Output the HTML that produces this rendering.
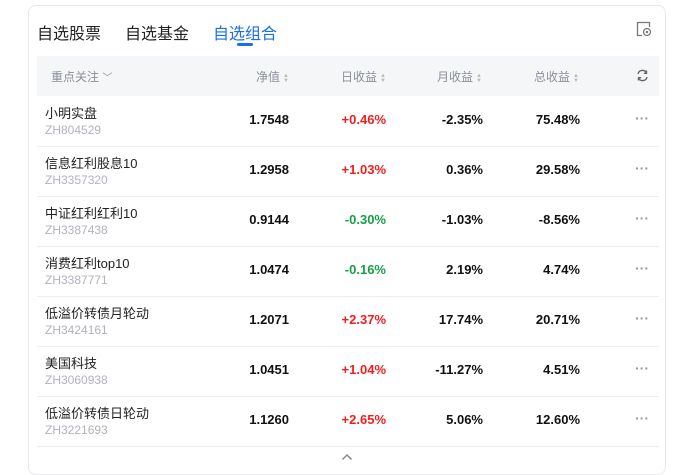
<!DOCTYPE html><html><head><meta charset="utf-8"><style>
body{margin:0;width:673px;height:466px;background:#fff;font-family:"Liberation Sans","Noto Sans CJK SC",sans-serif;overflow:hidden;position:relative}
.card{position:absolute;left:28px;top:5px;width:638px;height:470px;border:1px solid #e6e8ee;border-radius:8px;box-sizing:border-box}
.tab{position:absolute;top:20px;font-size:16px;color:#222}
.tab.a{color:#1a6fe6}
.ul{position:absolute;left:237px;top:43px;width:16px;height:3px;border-radius:2px;background:#1a6fe6}
.hd{position:absolute;left:37px;top:56px;width:622px;height:40px;background:#f5f6f8}
.h{position:absolute;top:68px;font-size:12px;color:#8a8f99}
.ar{display:inline-block;width:5px;vertical-align:-1px;margin-left:3px;font-size:6px;line-height:5px;color:#bbb}
.row{position:absolute;left:37px;width:622px;height:50px;border-bottom:1px solid #eceef2}
.n{position:absolute;left:8px;top:7px;font-size:13px;color:#222}
.c{position:absolute;left:8px;top:27px;font-size:12px;color:#b0b3ba}
.v{position:absolute;top:16px;font-size:13px;font-weight:bold;color:#111;text-align:right;width:90px}
.r{color:#f01f1f}.g{color:#14a04a}
.d{position:absolute;left:598px;top:14px;font-size:14px;font-weight:bold;color:#999}
</style></head><body>
<div class="card"></div>
<div class="tab" style="left:37px">自选股票</div>
<div class="tab" style="left:125px">自选基金</div>
<div class="tab a" style="left:213px">自选组合</div>
<div class="ul"></div>
<svg style="position:absolute;left:636px;top:21px" width="16" height="16" viewBox="0 0 16 16" fill="none" stroke="#777" stroke-width="1.3"><path d="M5 1.5H1.5V14.5H6M5 1.5H13.5V6"/><circle cx="11" cy="11" r="3.5"/><circle cx="11" cy="11" r=".6" fill="#777"/></svg>
<div class="hd"></div>
<div class="h" style="left:51px">重点关注 <span style="font-size:10px">﹀</span></div>
<div class="h" style="left:256px">净值<span class="ar">▲<br>▼</span></div>
<div class="h" style="left:341px">日收益<span class="ar">▲<br>▼</span></div>
<div class="h" style="left:437px">月收益<span class="ar">▲<br>▼</span></div>
<div class="h" style="left:534px">总收益<span class="ar">▲<br>▼</span></div>
<svg style="position:absolute;left:636px;top:69px" width="13" height="13" viewBox="0 0 13 13" fill="none" stroke="#666" stroke-width="1.4"><path d="M2 5A4.5 4.5 0 0 1 10.5 4M11 8A4.5 4.5 0 0 1 2.5 9"/><path d="M10.5 1.5V4.3H7.8M2.5 11.5V8.7H5.2"/></svg>
<div class="row" style="top:96px"><div class="n">小明实盘</div><div class="c">ZH804529</div><div class="v" style="left:162px">1.7548</div><div class="v r" style="left:259px">+0.46%</div><div class="v" style="left:356px">-2.35%</div><div class="v" style="left:453px">75.48%</div><div class="d">···</div></div>
<div class="row" style="top:146px"><div class="n">信息红利股息10</div><div class="c">ZH3357320</div><div class="v" style="left:162px">1.2958</div><div class="v r" style="left:259px">+1.03%</div><div class="v" style="left:356px">0.36%</div><div class="v" style="left:453px">29.58%</div><div class="d">···</div></div>
<div class="row" style="top:196px"><div class="n">中证红利红利10</div><div class="c">ZH3387438</div><div class="v" style="left:162px">0.9144</div><div class="v g" style="left:259px">-0.30%</div><div class="v" style="left:356px">-1.03%</div><div class="v" style="left:453px">-8.56%</div><div class="d">···</div></div>
<div class="row" style="top:246px"><div class="n">消费红利top10</div><div class="c">ZH3387771</div><div class="v" style="left:162px">1.0474</div><div class="v g" style="left:259px">-0.16%</div><div class="v" style="left:356px">2.19%</div><div class="v" style="left:453px">4.74%</div><div class="d">···</div></div>
<div class="row" style="top:296px"><div class="n">低溢价转债月轮动</div><div class="c">ZH3424161</div><div class="v" style="left:162px">1.2071</div><div class="v r" style="left:259px">+2.37%</div><div class="v" style="left:356px">17.74%</div><div class="v" style="left:453px">20.71%</div><div class="d">···</div></div>
<div class="row" style="top:346px"><div class="n">美国科技</div><div class="c">ZH3060938</div><div class="v" style="left:162px">1.0451</div><div class="v r" style="left:259px">+1.04%</div><div class="v" style="left:356px">-11.27%</div><div class="v" style="left:453px">4.51%</div><div class="d">···</div></div>
<div class="row" style="top:396px"><div class="n">低溢价转债日轮动</div><div class="c">ZH3221693</div><div class="v" style="left:162px">1.1260</div><div class="v r" style="left:259px">+2.65%</div><div class="v" style="left:356px">5.06%</div><div class="v" style="left:453px">12.60%</div><div class="d">···</div></div>
<svg style="position:absolute;left:341px;top:453px" width="12" height="8" viewBox="0 0 12 8" fill="none" stroke="#888" stroke-width="1.5"><path d="M1.5 6.5L6 2L10.5 6.5"/></svg>
</body></html>
